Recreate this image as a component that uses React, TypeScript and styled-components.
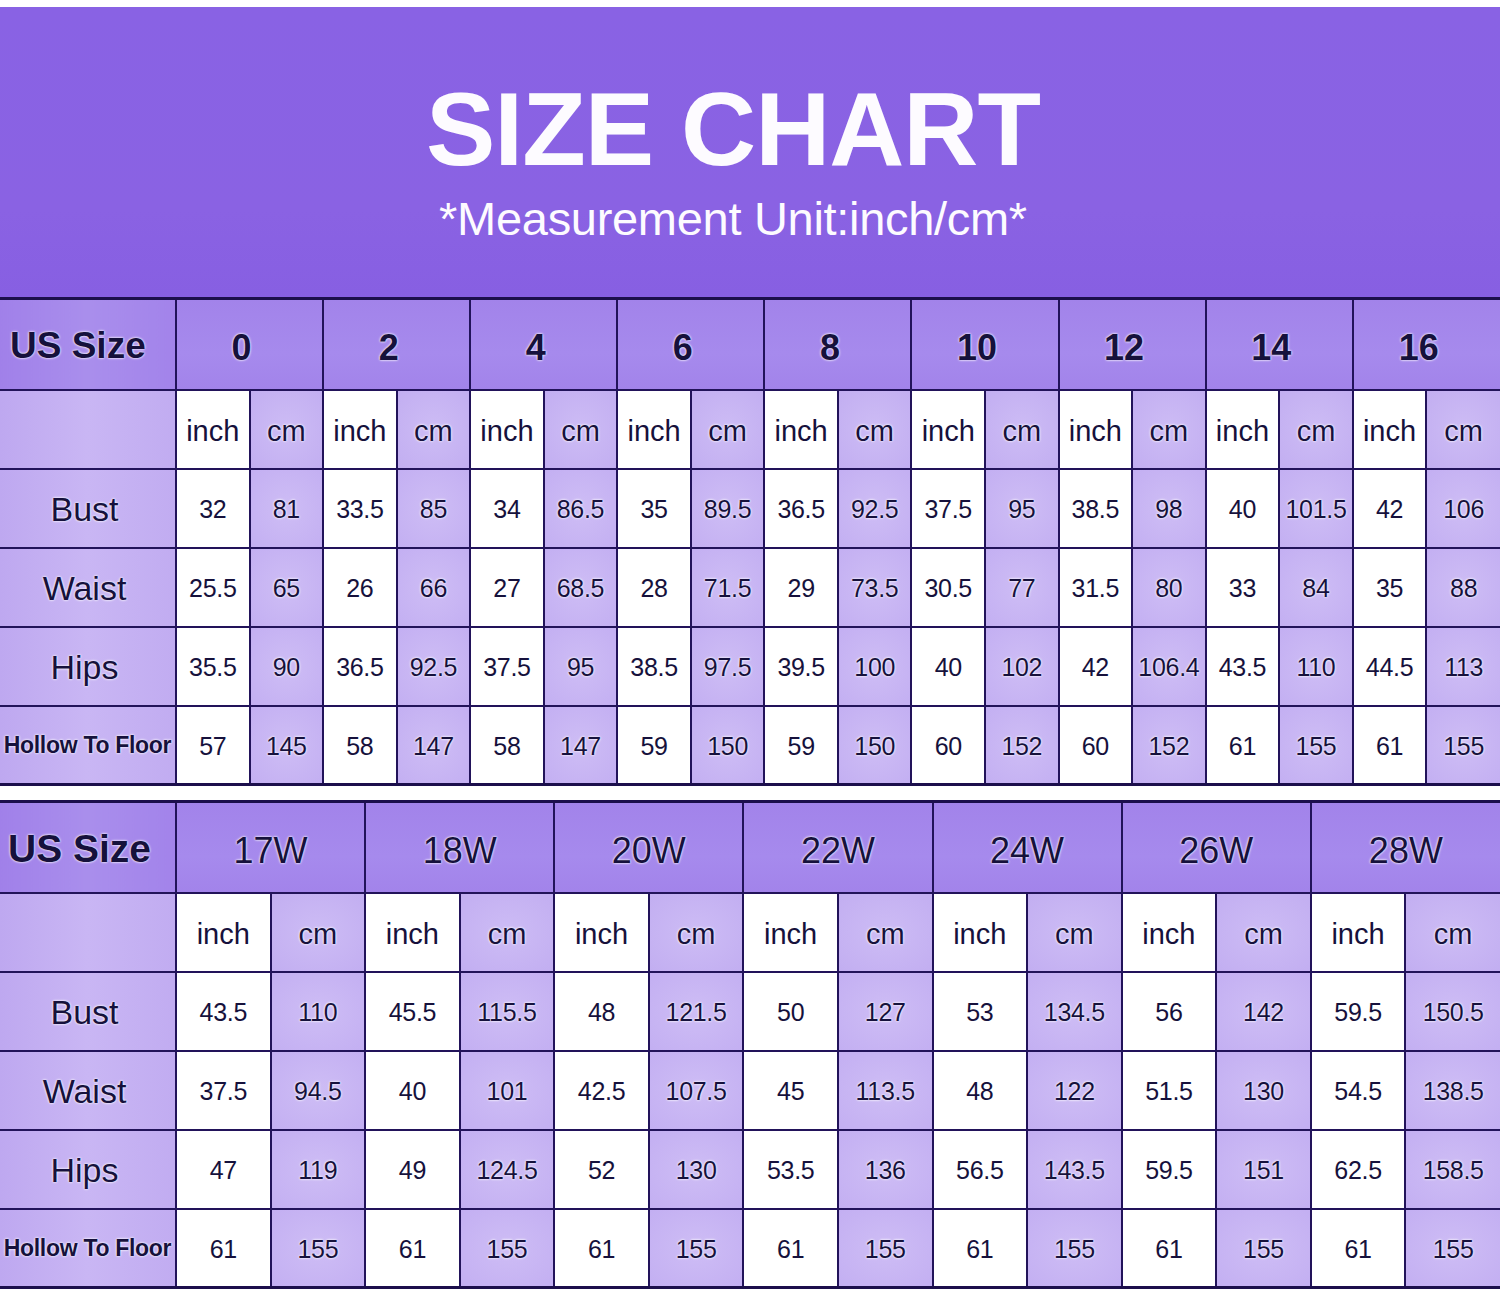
import React from 'react';
import styled, { createGlobalStyle } from 'styled-components';

type Row = { label: string; values: (string | number)[] };
type Chart = { sizes: string[]; rows: Row[]; bold: boolean };

const CHARTS: Chart[] = [
  {
    sizes: ['0', '2', '4', '6', '8', '10', '12', '14', '16'],
    bold: true,
    rows: [
      { label: 'Bust', values: [32, 81, 33.5, 85, 34, 86.5, 35, 89.5, 36.5, 92.5, 37.5, 95, 38.5, 98, 40, 101.5, 42, 106] },
      { label: 'Waist', values: [25.5, 65, 26, 66, 27, 68.5, 28, 71.5, 29, 73.5, 30.5, 77, 31.5, 80, 33, 84, 35, 88] },
      { label: 'Hips', values: [35.5, 90, 36.5, 92.5, 37.5, 95, 38.5, 97.5, 39.5, 100, 40, 102, 42, 106.4, 43.5, 110, 44.5, 113] },
      { label: 'Hollow To Floor', values: [57, 145, 58, 147, 58, 147, 59, 150, 59, 150, 60, 152, 60, 152, 61, 155, 61, 155] },
    ],
  },
  {
    sizes: ['17W', '18W', '20W', '22W', '24W', '26W', '28W'],
    bold: false,
    rows: [
      { label: 'Bust', values: [43.5, 110, 45.5, 115.5, 48, 121.5, 50, 127, 53, 134.5, 56, 142, 59.5, 150.5] },
      { label: 'Waist', values: [37.5, 94.5, 40, 101, 42.5, 107.5, 45, 113.5, 48, 122, 51.5, 130, 54.5, 138.5] },
      { label: 'Hips', values: [47, 119, 49, 124.5, 52, 130, 53.5, 136, 56.5, 143.5, 59.5, 151, 62.5, 158.5] },
      { label: 'Hollow To Floor', values: [61, 155, 61, 155, 61, 155, 61, 155, 61, 155, 61, 155, 61, 155] },
    ],
  },
];

export default function App() {
  return (
    <>
      <GlobalStyle />
      <Page>
        <Banner>
          <Title>SIZE CHART</Title>
          <Subtitle>*Measurement Unit:inch/cm*</Subtitle>
        </Banner>
        <Tables>
          {CHARTS.map((chart, idx) => (
            <SizeTable key={idx} chart={chart} />
          ))}
        </Tables>
      </Page>
    </>
  );
}

function SizeTable({ chart }: { chart: Chart }) {
  return (
    <Table>
      <colgroup>
        <col style={{ width: 176 }} />
        {chart.sizes.flatMap((s) => [<col key={s + 'i'} />, <col key={s + 'c'} />])}
      </colgroup>
      <tbody>
        <HeadRow>
          <HeadLabel $big={!chart.bold}>US Size</HeadLabel>
          {chart.sizes.map((s) => (
            <SizeCell key={s} colSpan={2} $bold={chart.bold}>
              {s}
            </SizeCell>
          ))}
        </HeadRow>
        <BodyRow>
          <RowLabel />
          {chart.sizes.flatMap((s) => [
            <UnitCell key={s + 'i'} $cm={false}>inch</UnitCell>,
            <UnitCell key={s + 'c'} $cm>cm</UnitCell>,
          ])}
        </BodyRow>
        {chart.rows.map((row) => (
          <BodyRow key={row.label}>
            <RowLabel $small={row.label.length > 6}>{row.label}</RowLabel>
            {row.values.map((v, i) => (
              <ValueCell key={i} $cm={i % 2 === 1}>
                {v}
              </ValueCell>
            ))}
          </BodyRow>
        ))}
      </tbody>
    </Table>
  );
}

const GlobalStyle = createGlobalStyle`
  html, body {
    margin: 0;
    padding: 0;
    background: #ffffff;
  }
  body {
    font-family: "Liberation Sans", Arial, sans-serif;
  }
`;

const Page = styled.div`
  width: 1500px;
  padding-top: 7px;
  padding-bottom: 15px;
  background: #ffffff;
`;

const Banner = styled.header`
  height: 290px;
  background: linear-gradient(180deg, #8962e4 0%, #8a62e3 70%, #875fe2 100%);
  display: flex;
  flex-direction: column;
  align-items: center;
  color: #ffffff;
  box-sizing: border-box;
  padding: 70px 34px 0 0;
`;

const Title = styled.h1`
  margin: 0;
  font-size: 104px;
  line-height: 104px;
  font-weight: 700;
  letter-spacing: -1px;
  color: #fdfbff;
`;

const Subtitle = styled.div`
  margin-top: 12px;
  font-size: 47px;
  line-height: 52px;
  letter-spacing: -0.3px;
  color: #fdfbff;
`;

const Tables = styled.div`
  display: flex;
  flex-direction: column;
  gap: 14px;
`;

const Table = styled.table`
  width: 1500px;
  table-layout: fixed;
  border-collapse: collapse;
  border-top: 3px solid #1c0f4c;
  border-bottom: 3px solid #1c0f4c;

  td {
    border: 2px solid #22135a;
    padding: 0;
    text-align: center;
    color: #16113c;
    text-shadow: 0 0 2px #ffffff, 0 0 3px rgba(255, 255, 255, 0.8);
    white-space: nowrap;
    overflow: visible;
  }
  td:first-child {
    border-left: none;
  }
  td:last-child {
    border-right: none;
  }
`;

const HeadRow = styled.tr`
  height: 91px;
  background: linear-gradient(180deg, #a283ea 0%, #a68aed 60%, #a283ea 100%);
`;

const BodyRow = styled.tr`
  height: 79px;
`;

const HeadLabel = styled.td<{ $big: boolean }>`
  && {
    text-align: left;
    padding-left: ${(p) => (p.$big ? '8px' : '10px')};
    padding-top: 4px;
  }
  font-size: ${(p) => (p.$big ? '39px' : '37px')};
  font-weight: 700;
  background: linear-gradient(90deg, #a080e9 0%, #a98eec 50%, #a283ea 100%);
`;

const SizeCell = styled.td<{ $bold: boolean }>`
  font-size: 36px;
  font-weight: ${(p) => (p.$bold ? 700 : 400)};
  && {
    padding-top: 7px;
    padding-right: ${(p) => (p.$bold ? '16px' : '0')};
  }
`;

const RowLabel = styled.td<{ $small?: boolean }>`
  font-size: ${(p) => (p.$small ? '23px' : '34px')};
  font-weight: ${(p) => (p.$small ? 700 : 400)};
  letter-spacing: ${(p) => (p.$small ? '-0.3px' : '0')};
  background: linear-gradient(90deg, #bea8f0 0%, #c9b6f4 50%, #c1acf1 100%);
  && {
    padding-top: 2px;
    padding-right: ${(p) => (p.$small ? '0' : '6px')};
  }
`;

const UnitCell = styled.td<{ $cm: boolean }>`
  font-size: 29px;
  background: ${(p) => (p.$cm ? 'radial-gradient(ellipse at center, #cdbcf5 0%, #c2aef1 100%)' : '#ffffff')};
  && {
    padding-top: 5px;
  }
`;

const ValueCell = styled.td<{ $cm: boolean }>`
  font-size: 25px;
  letter-spacing: -0.3px;
  background: ${(p) => (p.$cm ? 'radial-gradient(ellipse at center, #cebdf5 0%, #c3aff2 100%)' : '#ffffff')};
  && {
    padding-top: 3px;
  }
`;
